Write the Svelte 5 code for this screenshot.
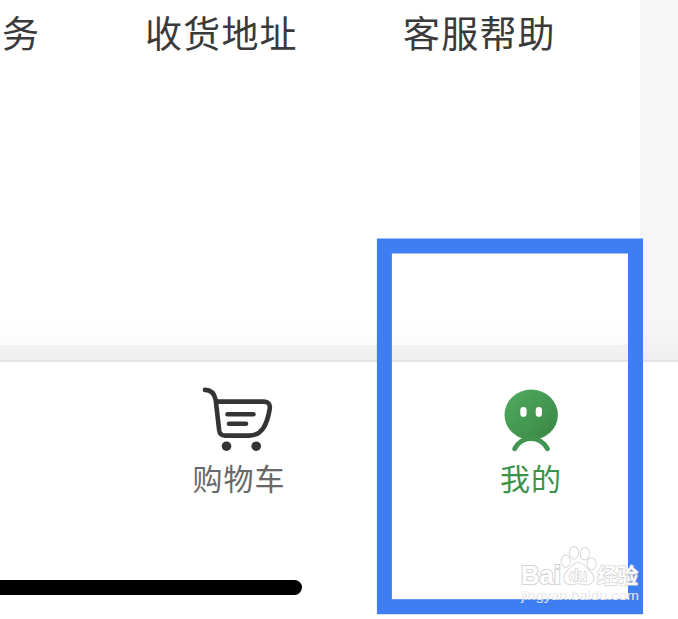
<script>
  const services = ['务', '收货地址', '客服帮助'];
</script>

<div class="screen">
  <section class="content">
    <div class="card">
      <div class="services">
        {#each services as label, i}
          <span class="s{i}">{label}</span>
        {/each}
      </div>
    </div>
  </section>

  <nav class="tabs">
    <div class="row">
      <div class="tab cart">
        <svg width="72" height="66" viewBox="202 387 72 66" fill="none" stroke="#333435" stroke-width="4.6" stroke-linecap="round" stroke-linejoin="round">
          <path d="M205 389.9C211 390 214.3 393 215.7 400L219.2 430.5Q220 435.6 225 435.6H249C262 435.6 267 425 269.8 408.5Q270.5 401.8 264 401.6H217" />
          <path d="M227.5 414.3H253.5M229 423.8H246" />
          <g fill="#333435" stroke="none">
            <circle cx="226.5" cy="446.2" r="4.8" />
            <circle cx="256.2" cy="446.2" r="4.8" />
          </g>
        </svg>
        <span>购物车</span>
      </div>
      <div class="tab mine">
        <svg width="60" height="66" viewBox="501 387 60 66">
          <defs>
            <linearGradient id="face" x1="0" y1="0" x2="1" y2="1">
              <stop offset="0.15" stop-color="#4ca65b" />
              <stop offset="0.95" stop-color="#3b8746" />
            </linearGradient>
          </defs>
          <ellipse cx="531.2" cy="414.8" rx="26.7" ry="25.2" fill="url(#face)" />
          <path d="M514.6 448.8C518 442.4 524 438.6 531 438.6S544 442.4 547.5 448.8" fill="none" stroke="#429551" stroke-width="4.8" stroke-linecap="round" />
          <rect x="520.3" y="407" width="6.3" height="9.8" rx="3.1" fill="#fff" />
          <rect x="535.7" y="407" width="6.3" height="9.8" rx="3.1" fill="#fff" />
        </svg>
        <span>我的</span>
      </div>
    </div>
    <div class="home"></div>
  </nav>

  <svg class="highlight" width="268" height="378" viewBox="376 237 268 378">
    <rect x="384.4" y="246" width="251.1" height="360.7" fill="none" stroke="#3d7ff2" stroke-width="15" />
  </svg>

  <svg class="watermark" width="128" height="62" viewBox="516 543 128 62">
    <g fill="#fff" stroke="#dcdcdc" stroke-width="1.1">
      <ellipse cx="565.7" cy="561.2" rx="4.5" ry="6.3" />
      <ellipse cx="574" cy="552.8" rx="4.6" ry="6.3" />
      <ellipse cx="584.8" cy="553.6" rx="4.6" ry="6.3" />
      <ellipse cx="591.5" cy="563.7" rx="4.6" ry="6" />
      <path d="M578 562.5C573 562.5 571 567.5 567 571C562 575.5 562.8 584.5 570 584.7C574 584.8 576 583.8 578.5 583.8S583.5 584.8 587.5 584.7C594.5 584.5 595.5 576 590.5 571.5C586 567.5 583.5 562.5 578 562.5Z" />
    </g>
    <g class="mark">
      <text x="521" y="583.5" font-size="26" font-weight="700" textLength="40" lengthAdjust="spacingAndGlyphs">Bai</text>
      <text class="du" x="569" y="581" font-size="16" textLength="18" lengthAdjust="spacingAndGlyphs">du</text>
      <text class="cjk" x="597" y="582.5" font-size="21" font-weight="500" textLength="41" lengthAdjust="spacingAndGlyphs">经验</text>
      <text class="url" x="521" y="599.5" font-size="13.5" textLength="118" lengthAdjust="spacingAndGlyphs">jingyan.baidu.com</text>
    </g>
  </svg>
</div>

<style>
  .screen {
    position: relative;
    width: 678px;
    height: 619px;
    overflow: hidden;
    background: #fff;
    font-family: "Noto Sans CJK SC", sans-serif;
  }
  .content {
    box-sizing: border-box;
    height: 362px;
    background: linear-gradient(#f6f6f6 325px, #efefef 360px);
    border-bottom: 2px solid #e4e4e4;
  }
  .card {
    width: 640px;
    height: 345px;
    background: linear-gradient(#fff 320px, #fcfcfc);
    border-bottom-right-radius: 20px;
  }
  .services {
    display: flex;
    padding-top: 4px;
    color: #3a3a3a;
    font-size: 37px;
    line-height: 56px;
    letter-spacing: 1.2px;
    white-space: nowrap;
  }
  .s0 { width: 143px; margin-left: 2px; }
  .s1 { width: 258px; }
  .tabs {
    display: flex;
    flex-direction: column;
    height: 257px;
  }
  .row {
    display: flex;
    height: 218px;
    padding-top: 25px;
    box-sizing: border-box;
  }
  .tab {
    display: flex;
    flex-direction: column;
    align-items: center;
    font-size: 30px;
    line-height: 48px;
    letter-spacing: 1px;
    white-space: nowrap;
  }
  .tab svg { flex: none; }
  .cart {
    width: 100px;
    margin-left: 188px;
    color: #686868;
  }
  .cart span { padding-left: 2px; }
  .mine {
    width: 100px;
    margin-left: 193px;
    color: #3b934b;
  }
  .home {
    width: 302px;
    height: 15px;
    background: #000;
    border-radius: 0 8px 8px 0;
  }
  .highlight {
    position: absolute;
    left: 376px;
    top: 237px;
  }
  .watermark {
    position: absolute;
    left: 516px;
    top: 543px;
  }
  .mark {
    font-family: "Liberation Sans", sans-serif;
    fill: #fff;
    stroke: #d4d4d4;
    stroke-width: 2px;
    paint-order: stroke;
  }
  .du { stroke-width: 1.6px; }
  .cjk {
    font-family: "Noto Sans CJK SC", sans-serif;
    stroke-width: 1.5px;
  }
  .url {
    fill: #e9e9e9;
    stroke: none;
  }
</style>
